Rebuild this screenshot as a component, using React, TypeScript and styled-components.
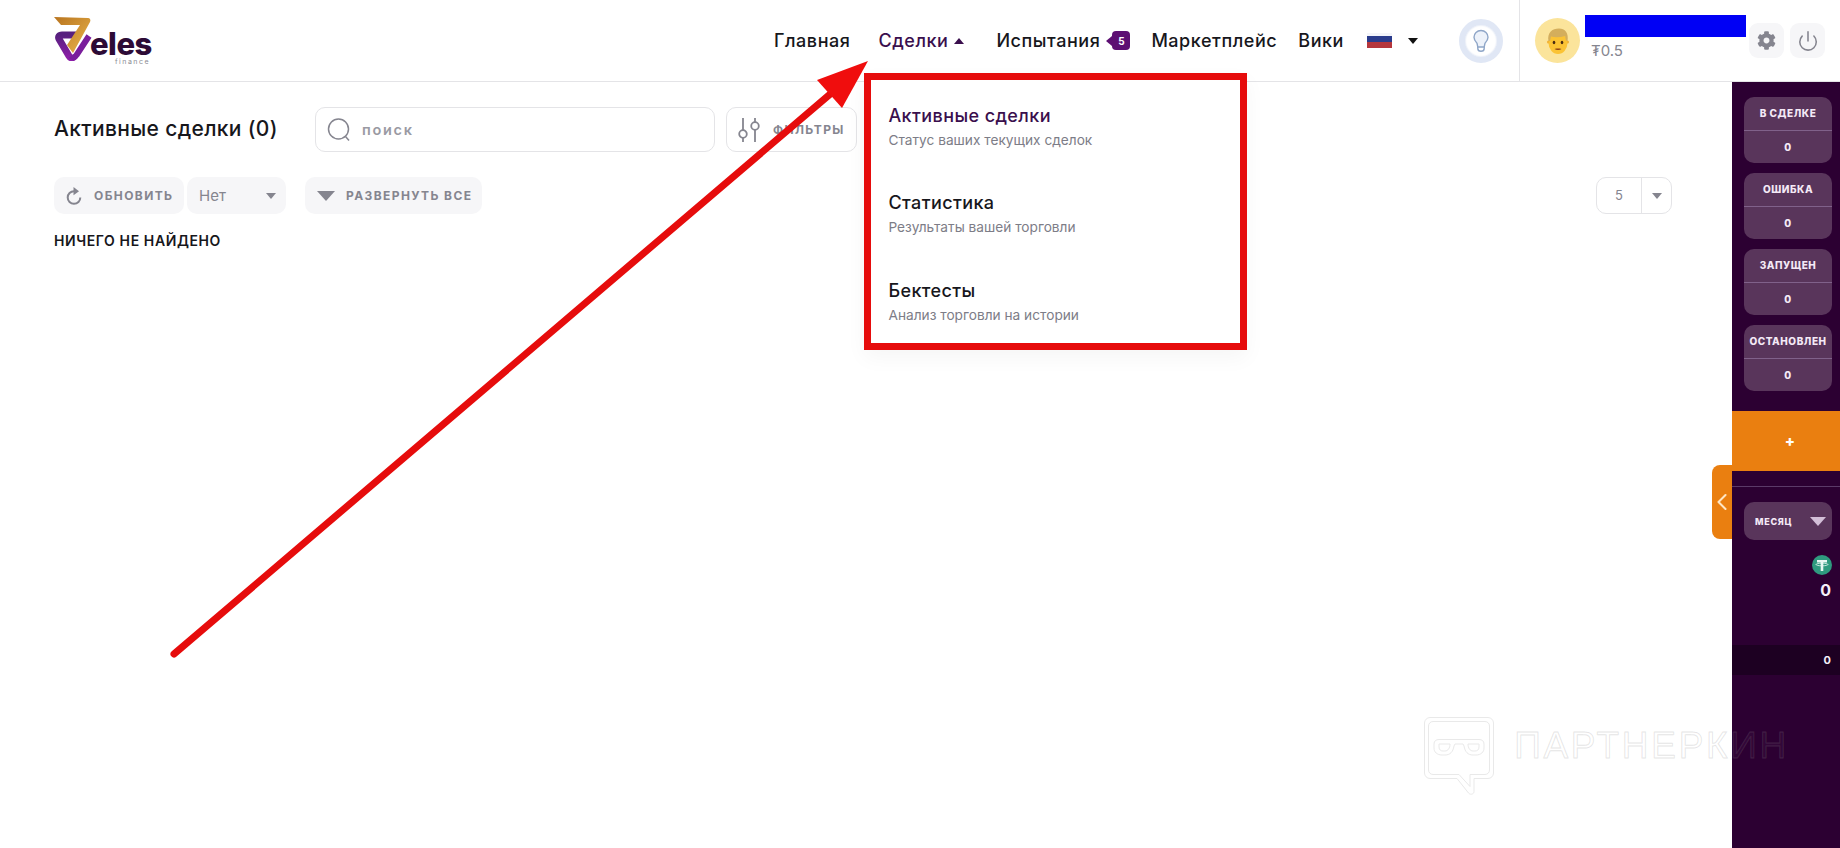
import React from 'react'
import styled, { createGlobalStyle } from 'styled-components'
import { ChevronLeft, Power } from 'lucide-react'
import { FaCog } from 'react-icons/fa'

const GlobalStyle = createGlobalStyle`
  html,
  body {
    margin: 0;
    padding: 0;
    background: #fff;
    font-family: Inter, "Noto Sans", sans-serif;
    overflow: hidden;
  }
`

const Page = styled.div`
  position: relative;
  display: flex;
  flex-direction: column;
  width: 1840px;
  height: 848px;
  overflow: hidden;
`

const Header = styled.header`
  display: flex;
  align-items: center;
  flex-shrink: 0;
  height: 81px;
  padding: 0 15px 0 54px;
  border-bottom: 1px solid #e4e4e7;
`

const Logo = styled.div`
  position: relative;
  width: 100px;
  height: 50px;
  margin-top: -2px;

  svg {
    position: absolute;
    left: 0;
    top: 0;
  }
`

const LogoWord = styled.span`
  position: absolute;
  left: 36px;
  top: 16px;
  font-size: 31px;
  font-weight: 800;
  line-height: 26px;
  letter-spacing: -0.5px;
  color: #2d0b36;
`

const LogoSub = styled.span`
  position: absolute;
  left: 61px;
  top: 42px;
  font-size: 7px;
  line-height: 9px;
  letter-spacing: 1.5px;
  color: #8c8c94;
`

const Nav = styled.nav`
  display: flex;
  align-items: center;
  margin-left: auto;
`

const NavItem = styled.div<{ $active?: boolean; $gap: number }>`
  position: relative;
  display: flex;
  align-items: center;
  margin-right: ${({ $gap }) => $gap}px;
  font-size: 18px;
  font-weight: 500;
  line-height: 22px;
  letter-spacing: 0.55px;
  white-space: nowrap;
  color: ${({ $active }) => ($active ? '#3a0f4d' : '#17171c')};
`

const Caret = styled.span<{ $up?: boolean; $color: string; $size: number; $after?: number }>`
  display: inline-block;
  width: 0;
  height: 0;
  margin-left: ${({ $up }) => ($up ? 6 : 0)}px;
  margin-right: ${({ $after }) => $after ?? 0}px;
  border-left: ${({ $size }) => $size}px solid transparent;
  border-right: ${({ $size }) => $size}px solid transparent;
  ${({ $up, $color, $size }) =>
    $up
      ? `border-bottom: ${$size + 1}px solid ${$color};`
      : `border-top: ${$size + 1}px solid ${$color};`}
`

const Badge = styled.span`
  position: relative;
  display: flex;
  align-items: center;
  justify-content: center;
  width: 18px;
  height: 19px;
  margin-left: 12px;
  border-radius: 4px;
  background: #5d0f73;
  color: #fff;
  font-size: 10px;
  font-weight: 700;
  letter-spacing: 0;

  &::before {
    content: '';
    position: absolute;
    left: -6px;
    top: 5px;
    border-top: 5px solid transparent;
    border-bottom: 5px solid transparent;
    border-right: 6px solid #5d0f73;
  }
`

const FlagWrap = styled.div`
  display: flex;
  align-items: center;
  gap: 16px;
  margin-right: 41px;
`

const BulbButton = styled.div`
  display: flex;
  align-items: center;
  justify-content: center;
  width: 32px;
  height: 32px;
  border: 6px solid #e0e7f5;
  border-radius: 50%;
  background: #fff;
  box-shadow: inset 0 0 2px #c6d2ea;
  margin-right: 16px;
`

const Divider = styled.div`
  align-self: stretch;
  width: 1px;
  background: #e4e4e7;
  margin-right: 15px;
`

const Avatar = styled.div`
  display: flex;
  align-items: center;
  justify-content: center;
  width: 45px;
  height: 45px;
  border-radius: 50%;
  background: #fbe49b;
  margin-right: 5px;
`

const Account = styled.div`
  display: flex;
  flex-direction: column;
  align-self: flex-start;
  width: 161px;
  margin-top: 15px;
  margin-right: 3px;
`

const Redaction = styled.div`
  height: 22px;
  background: #0000f5;
`

const Balance = styled.div`
  margin: 5px 0 0 6px;
  font-size: 15px;
  line-height: 18px;
  color: #85858f;
`

const IconButton = styled.div<{ $gap?: number }>`
  display: flex;
  align-items: center;
  justify-content: center;
  width: 35px;
  height: 35px;
  margin-right: ${({ $gap }) => $gap ?? 0}px;
  border-radius: 9px;
  background: #f6f6f8;
  color: #85858f;
`

const Dropdown = styled.div`
  position: absolute;
  left: -14px;
  top: 43px;
  z-index: 5;
  box-sizing: border-box;
  width: 383px;
  height: 277px;
  padding: 25px 17px 0;
  border: 7px solid #e60c0c;
  background: #fff;
  box-shadow: 0 8px 20px rgba(0, 0, 0, 0.04);
`

const MenuItem = styled.div`
  height: 87.5px;
`

const MenuTitle = styled.div<{ $active?: boolean }>`
  font-size: 18px;
  font-weight: 500;
  line-height: 22px;
  letter-spacing: 0.4px;
  color: ${({ $active }) => ($active ? '#3a0f4d' : '#17171c')};
`

const MenuText = styled.div`
  margin-top: 4px;
  font-size: 13.7px;
  font-weight: 400;
  line-height: 18px;
  letter-spacing: 0;
  color: #7d7d87;
`

const Body = styled.div`
  display: flex;
  flex: 1;
  min-height: 0;
`

const Main = styled.main`
  flex: 1;
  padding: 25px 60px 0 54px;
`

const SearchRow = styled.div`
  display: flex;
  align-items: center;
  height: 45px;
`

const Title = styled.h1`
  width: 261px;
  margin: 0 0 2px;
  font-size: 21px;
  font-weight: 500;
  letter-spacing: 0.35px;
  white-space: nowrap;
  color: #17171c;
`

const Search = styled.div`
  display: flex;
  align-items: center;
  gap: 11px;
  box-sizing: border-box;
  width: 400px;
  height: 45px;
  padding-left: 11px;
  border: 1px solid #e4e4e7;
  border-radius: 10px;
`

const Placeholder = styled.span`
  font-size: 14.5px;
  font-weight: 600;
  letter-spacing: 1.7px;
  color: #9a9aa3;
`

const FilterButton = styled.div`
  display: flex;
  align-items: center;
  gap: 13px;
  box-sizing: border-box;
  width: 131px;
  height: 45px;
  margin-left: 11px;
  padding-left: 11px;
  border: 1px solid #e4e4e7;
  border-radius: 10px;
`

const ActionRow = styled.div`
  display: flex;
  align-items: center;
  height: 37px;
  margin-top: 25px;
`

const Action = styled.div<{ $width: number; $left?: number; $gap: number }>`
  display: flex;
  align-items: center;
  gap: ${({ $gap }) => $gap}px;
  box-sizing: border-box;
  width: ${({ $width }) => $width}px;
  height: 37px;
  margin-left: ${({ $left }) => $left ?? 0}px;
  padding-left: 12px;
  border-radius: 10px;
  background: #f6f6f8;
`

const ActionLabel = styled.span`
  font-size: 12px;
  font-weight: 700;
  letter-spacing: 1.4px;
  white-space: nowrap;
  color: #85858f;
`

const SelectValue = styled.span`
  flex: 1;
  font-size: 15px;
  color: #85858f;
`

const Pager = styled.div`
  display: flex;
  align-items: center;
  box-sizing: border-box;
  width: 76px;
  height: 37px;
  margin-left: auto;
  border: 1px solid #e4e4e7;
  border-radius: 10px;
`

const PagerValue = styled.span`
  width: 44px;
  line-height: 35px;
  border-right: 1px solid #e4e4e7;
  text-align: center;
  font-size: 13px;
  color: #85858f;
`

const PagerCaret = styled.span`
  display: flex;
  flex: 1;
  justify-content: center;
`

const Empty = styled.div`
  margin-top: 18px;
  font-size: 14px;
  font-weight: 600;
  line-height: 18px;
  letter-spacing: 0.6px;
  color: #17171c;
`

const Sidebar = styled.aside`
  position: relative;
  display: flex;
  flex-direction: column;
  flex-shrink: 0;
  width: 108px;
  padding-top: 15px;
  background: #2c0032;
`

const StatCard = styled.div`
  display: flex;
  flex-direction: column;
  width: 88px;
  height: 66px;
  margin: 0 0 10px 12px;
  border-radius: 10px;
  background: #59355b;
  color: #f4e9f6;
  font-size: 10px;
  font-weight: 800;
  letter-spacing: 0.55px;
  text-align: center;
`

const StatLabel = styled.div`
  height: 33px;
  line-height: 33px;
  white-space: nowrap;
  border-bottom: 1px solid #80618a;
`

const StatValue = styled.div`
  flex: 1;
  line-height: 32px;
`

const AddButton = styled.div`
  display: flex;
  align-items: center;
  justify-content: center;
  height: 60px;
  margin-top: 10px;
  padding-left: 8px;
  background: #ea7f10;
  color: #fff;
  font-size: 15px;
  font-weight: 800;
`

const Handle = styled.div`
  position: absolute;
  left: -20px;
  top: 383px;
  display: flex;
  align-items: center;
  justify-content: center;
  width: 20px;
  height: 74px;
  border-radius: 8px 0 0 8px;
  background: #ea7f10;
  color: #ffe6c4;

  svg {
    flex-shrink: 0;
  }
`

const SideLine = styled.div`
  height: 1px;
  margin-top: 15px;
  background: #5b3a68;
`

const Period = styled.div`
  display: flex;
  align-items: center;
  justify-content: space-between;
  box-sizing: border-box;
  width: 88px;
  height: 38px;
  margin: 15px 0 0 12px;
  padding: 0 6px 0 11px;
  border-radius: 10px;
  background: #59355b;
  color: #f4e9f6;
  font-size: 9px;
  font-weight: 800;
  letter-spacing: 0.7px;
`

const Coin = styled.div`
  display: flex;
  justify-content: flex-end;
  margin: 15px 8px 0 0;
`

const Total = styled.div`
  margin: 3px 9px 0 0;
  text-align: right;
  font-size: 16px;
  font-weight: 700;
  line-height: 24px;
  color: #f6eef8;
`

const Strip = styled.div`
  height: 30px;
  margin-top: 43px;
  padding-right: 9px;
  background: #1d0022;
  text-align: right;
  font-size: 11px;
  font-weight: 700;
  line-height: 30px;
  color: #f6eef8;
`

const Watermark = styled.div`
  position: absolute;
  right: 51px;
  bottom: 53px;
  z-index: 3;
  display: flex;
  align-items: flex-start;
  gap: 20px;
  pointer-events: none;
`

const WatermarkText = styled.span`
  margin-top: 8px;
  font-family: "Liberation Sans", sans-serif;
  font-size: 37px;
  line-height: 42px;
  letter-spacing: 2.7px;
  color: rgba(255, 255, 255, 0.03);
  -webkit-text-stroke: 1px rgba(140, 140, 140, 0.22);
`

const Annotation = styled.svg`
  position: absolute;
  left: 0;
  top: 0;
  z-index: 6;
  pointer-events: none;
`

const LogoMark = () => (
  <svg width="40" height="46" viewBox="0 0 40 46">
    <defs>
      <linearGradient id="gold" x1="0" y1="0" x2="1" y2="1">
        <stop offset="0" stopColor="#b8741f" />
        <stop offset="1" stopColor="#eab54b" />
      </linearGradient>
      <linearGradient id="violet" x1="0" y1="0" x2="0" y2="1">
        <stop offset="0" stopColor="#57207e" />
        <stop offset="1" stopColor="#8c1fa8" />
      </linearGradient>
    </defs>
    <path
      d="M24 20H8c-3 0-4 2-3 4l10 17c1.500 2.500 4 2.500 5.500 0"
      fill="none"
      stroke="url(#violet)"
      strokeWidth="7"
      strokeLinejoin="round"
    />
    <path d="M0 2l34 1c2 0 3 2 2 4L19 38l-6-8 13-20H7z" fill="url(#gold)" />
    <path d="M17 41c2 2 4 1.500 5.500-1L35 21" fill="none" stroke="#7a1e9c" strokeWidth="6" />
  </svg>
)

const BulbIcon = () => (
  <svg width="18" height="24" viewBox="0 0 18 24" fill="none" stroke="#8fa6c8" strokeWidth="1.400">
    <path d="M9 1.500c-4 0-7 3-7 6.700 0 2.600 1.500 4.200 3 6l.8 3.800h6.400l.8-3.800c1.500-1.800 3-3.400 3-6C16 4.500 13 1.500 9 1.500z" fill="#edf2fa" />
    <path d="M5.800 18v1.500c0 1.600 1.300 2.800 3.200 2.800s3.200-1.200 3.200-2.800V18" />
  </svg>
)

const FaceIcon = () => (
  <svg width="22" height="26" viewBox="0 0 22 26">
    <circle cx="1.500" cy="14" r="1.500" fill="#f0ae33" />
    <circle cx="20.500" cy="14" r="1.500" fill="#f0ae33" />
    <ellipse cx="11" cy="15" rx="9.500" ry="11" fill="#fbc334" />
    <path d="M1.500 13C0 5 5 .500 12 .500c6 0 10 4.500 8.500 12.500l-1.500-.5-1-4.500C13 9.500 8 9.500 4 8.500l-1 4.500z" fill="#d4ae5c" />
    <ellipse cx="7" cy="14.500" rx="1.300" ry="1.700" fill="#4a2c12" />
    <ellipse cx="15" cy="14.500" rx="1.300" ry="1.700" fill="#4a2c12" />
    <path d="M7.500 21c2 1.300 5 1.300 7 0-2.300-.6-4.700-.6-7 0z" fill="#8a3f14" />
  </svg>
)

const SearchIcon = () => (
  <svg width="24" height="24" viewBox="0 0 24 24" fill="none" stroke="#85858f" strokeWidth="1.500">
    <circle cx="11.500" cy="11" r="10" />
    <path d="M18.500 18.500l3.500 4" />
  </svg>
)

const FilterIcon = () => (
  <svg width="22" height="26" viewBox="0 0 22 26" fill="none" stroke="#85858f" strokeWidth="1.800">
    <path d="M5 1v12M5 21v4M17 1v4M17 13v12" />
    <circle cx="5" cy="17" r="3.800" />
    <circle cx="17" cy="9" r="3.800" />
  </svg>
)

const RefreshIcon = () => (
  <svg width="16" height="18" viewBox="0 0 16 18" fill="none" stroke="#85858f" strokeWidth="2">
    <path d="M8 4.200A6.300 6.300 0 1 0 14.300 10.500" />
    <path d="M7.500 0v8.200l5.500-4z" fill="#85858f" stroke="none" />
  </svg>
)

const TetherIcon = () => (
  <svg width="20" height="20" viewBox="0 0 20 20">
    <circle cx="10" cy="10" r="10" fill="#2f9a7f" />
    <path d="M5 5h10v2.500h-3.700V16H8.700V7.500H5z" fill="#e9f6f2" />
    <ellipse cx="10" cy="9.500" rx="6" ry="1.300" fill="none" stroke="#e9f6f2" strokeWidth="0.800" />
  </svg>
)

const FlagIcon = () => (
  <svg width="25" height="15" viewBox="0 0 25 15">
    <rect width="25" height="5" fill="#f4f5fa" />
    <rect y="3" width="25" height="6" fill="#2a3c8c" />
    <rect y="9" width="25" height="6" fill="#b5363c" />
  </svg>
)

const WatermarkIcon = () => (
  <svg width="70" height="78" viewBox="0 0 70 78" fill="none" stroke="#e9e9e9" strokeWidth="1">
    <path d="M6 .500h58c3 0 5.500 2.500 5.500 5.500v50c0 3-2.500 5.500-5.500 5.500H50v13c0 3-4 3.500-5.500 1.500L33 61.500H6C3 61.500.500 59 .500 56V6C.500 3 3 .500 6 .500z" />
    <path d="M9 4.500h52c2.500 0 4.500 2 4.500 4.500v44c0 2.500-2 4.500-4.500 4.500H46v12L35 57.500H9c-2.500 0-4.500-2-4.500-4.500V9c0-2.500 2-4.500 4.500-4.500z" />
    <path d="M10 27c0-3 2-4.500 5-4.500h40c3 0 5 1.500 5 4.500v4c0 4-3 7-8 7h-3c-5 0-8-3-9-9l-1-2H31l-1 2c-1 6-4 9-9 9h-3c-5 0-8-3-8-7z" />
    <path d="M15 27v3c0 3 2 4 4 4h2c3 0 5-3 5-7zM44 27c0 4 2 7 5 7h2c2 0 4-1 4-4v-3z" />
  </svg>
)

const stats = ['В СДЕЛКЕ', 'ОШИБКА', 'ЗАПУЩЕН', 'ОСТАНОВЛЕН']

const menu = [
  { title: 'Активные сделки', text: 'Статус ваших текущих сделок', active: true },
  { title: 'Статистика', text: 'Результаты вашей торговли' },
  { title: 'Бектесты', text: 'Анализ торговли на истории' },
]

const App = () => {
  return (
    <Page>
      <GlobalStyle />
      <Header>
        <Logo>
          <LogoMark />
          <LogoWord>eles</LogoWord>
          <LogoSub>finance</LogoSub>
        </Logo>
        <Nav>
          <NavItem $gap={28}>Главная</NavItem>
          <NavItem $gap={32} $active>
            Сделки
            <Caret $up $color="#3a0f4d" $size={5} />
            <Dropdown>
              {menu.map((item) => (
                <MenuItem key={item.title}>
                  <MenuTitle $active={item.active}>{item.title}</MenuTitle>
                  <MenuText>{item.text}</MenuText>
                </MenuItem>
              ))}
            </Dropdown>
          </NavItem>
          <NavItem $gap={21}>
            Испытания
            <Badge>5</Badge>
          </NavItem>
          <NavItem $gap={21}>Маркетплейс</NavItem>
          <NavItem $gap={23}>Вики</NavItem>
          <FlagWrap>
            <FlagIcon />
            <Caret $color="#111" $size={5.5} />
          </FlagWrap>
        </Nav>
        <BulbButton>
          <BulbIcon />
        </BulbButton>
        <Divider />
        <Avatar>
          <FaceIcon />
        </Avatar>
        <Account>
          <Redaction />
          <Balance>₮0.5</Balance>
        </Account>
        <IconButton $gap={6}>
          <FaCog size={19} />
        </IconButton>
        <IconButton>
          <Power size={22} strokeWidth={1.7} />
        </IconButton>
      </Header>
      <Body>
        <Main>
          <SearchRow>
            <Title>Активные сделки (0)</Title>
            <Search>
              <SearchIcon />
              <Placeholder>поиск</Placeholder>
            </Search>
            <FilterButton>
              <FilterIcon />
              <ActionLabel>ФИЛЬТРЫ</ActionLabel>
            </FilterButton>
          </SearchRow>
          <ActionRow>
            <Action $width={130} $gap={12}>
              <RefreshIcon />
              <ActionLabel>ОБНОВИТЬ</ActionLabel>
            </Action>
            <Action $width={99} $left={3} $gap={0}>
              <SelectValue>Нет</SelectValue>
              <Caret $color="#85858f" $size={5} $after={10} />
            </Action>
            <Action $width={177} $left={19} $gap={11}>
              <Caret $color="#85858f" $size={9} />
              <ActionLabel>РАЗВЕРНУТЬ ВСЕ</ActionLabel>
            </Action>
            <Pager>
              <PagerValue>5</PagerValue>
              <PagerCaret>
                <Caret $color="#85858f" $size={5} />
              </PagerCaret>
            </Pager>
          </ActionRow>
          <Empty>НИЧЕГО НЕ НАЙДЕНО</Empty>
        </Main>
        <Sidebar>
          {stats.map((label) => (
            <StatCard key={label}>
              <StatLabel>{label}</StatLabel>
              <StatValue>0</StatValue>
            </StatCard>
          ))}
          <AddButton>+</AddButton>
          <Handle>
            <ChevronLeft size={28} strokeWidth={1.8} />
          </Handle>
          <SideLine />
          <Period>
            МЕСЯЦ
            <Caret $color="#d3bfd8" $size={8} />
          </Period>
          <Coin>
            <TetherIcon />
          </Coin>
          <Total>0</Total>
          <Strip>0</Strip>
        </Sidebar>
      </Body>
      <Watermark>
        <WatermarkIcon />
        <WatermarkText>ПАРТНЕРКИН</WatermarkText>
      </Watermark>
      <Annotation width="1840" height="848" viewBox="0 0 1840 848">
        <path d="M174 654L842 84" stroke="#e60c0c" strokeWidth="7" strokeLinecap="round" />
        <path d="M868 61L817 80L842 108z" fill="#f00d0d" />
      </Annotation>
    </Page>
  )
}

export default App
